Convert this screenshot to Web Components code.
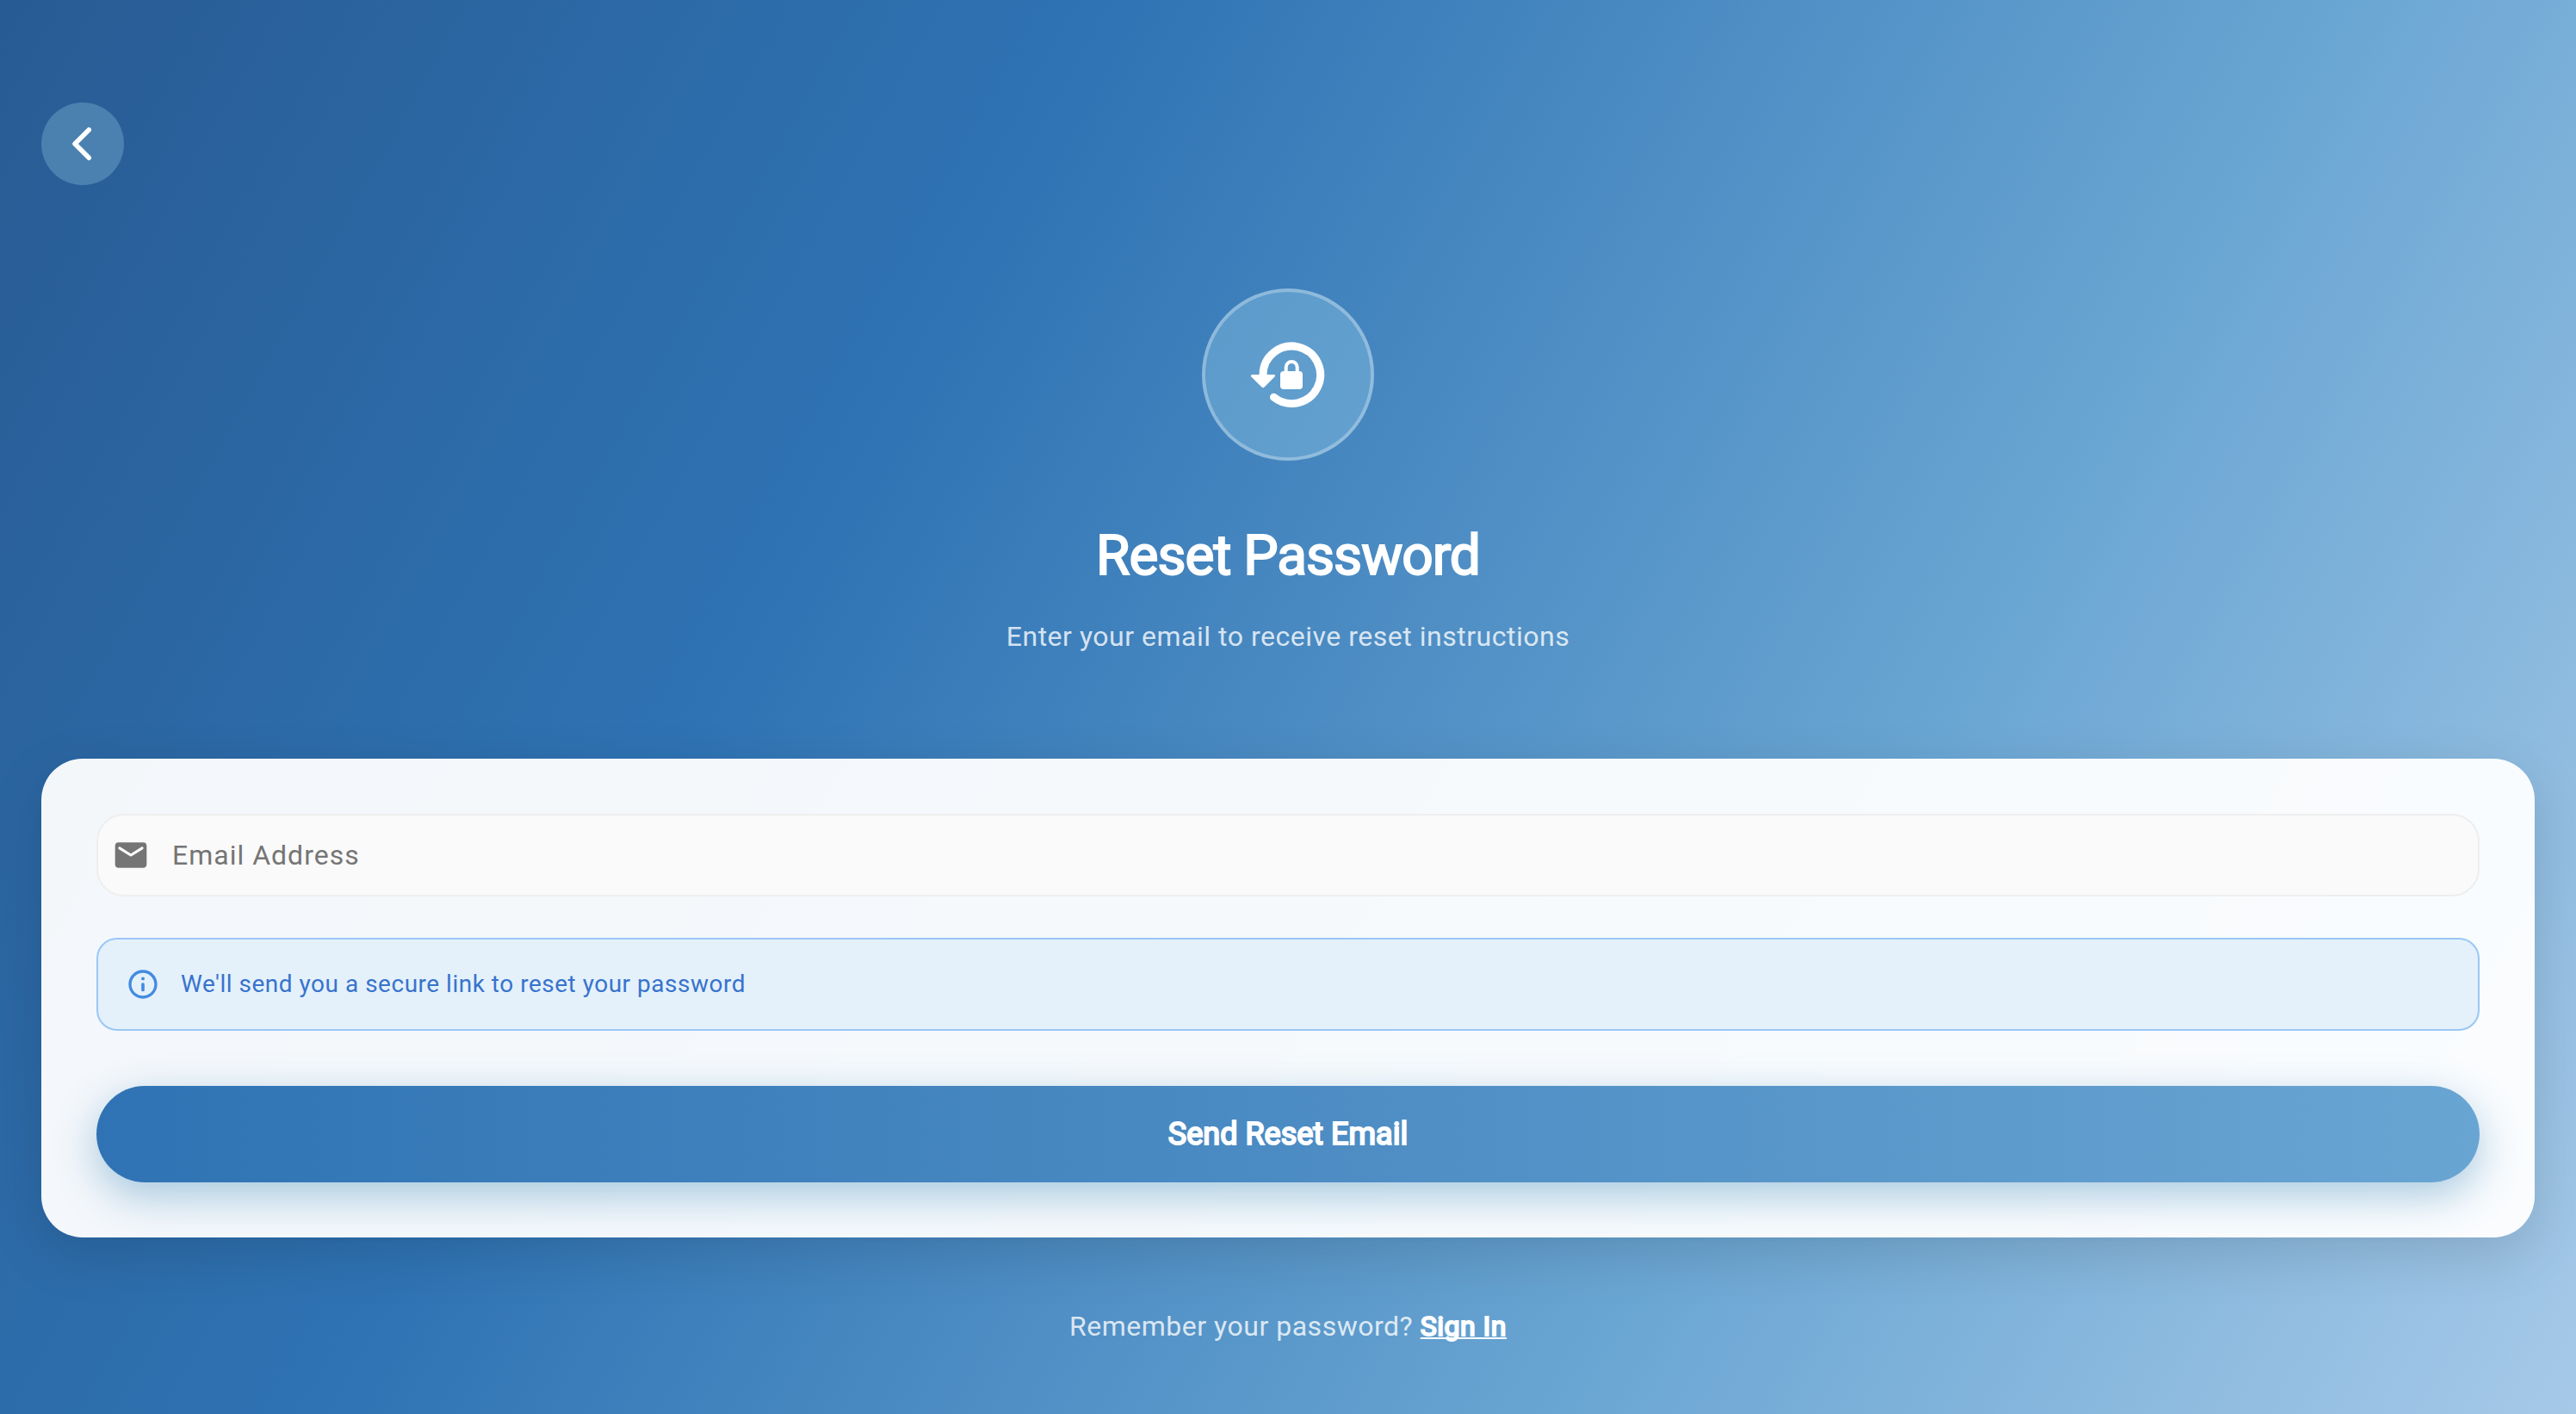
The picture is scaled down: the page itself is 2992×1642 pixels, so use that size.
<!DOCTYPE html>
<html lang="en">
<head>
<meta charset="utf-8">
<meta name="viewport" content="width=device-width, initial-scale=1">
<title>Reset Password</title>
<style>
  html, body { margin: 0; min-height: 100%; }
  body { font-family: Roboto, "Liberation Sans", sans-serif; -webkit-font-smoothing: antialiased; }
</style>
</head>
<body>
<reset-page>
  <back-button slot="nav"></back-button>
  <page-hero slot="hero">
    <span slot="title">Reset Password</span>
    <span slot="subtitle">Enter your email to receive reset instructions</span>
  </page-hero>
  <form-card slot="card">
    <email-field label="Email Address"></email-field>
    <info-note>We'll send you a secure link to reset your password</info-note>
    <primary-button>Send Reset Email</primary-button>
  </form-card>
  <sign-in-prompt slot="footer" href="#signin">
    Remember your password?
    <span slot="action">Sign In</span>
  </sign-in-prompt>
</reset-page>

<script>
  function define(name, markup, setup) {
    const template = document.createElement('template');
    template.innerHTML = markup;
    customElements.define(name, class extends HTMLElement {
      constructor() {
        super();
        this.attachShadow({ mode: 'open' }).append(template.content.cloneNode(true));
      }
      connectedCallback() {
        if (setup) setup(this, this.shadowRoot);
      }
    });
  }

  define('reset-page', `
    <style>
      :host {
        display: flex; flex-direction: column; box-sizing: border-box;
        min-height: 100vh; padding: 119px 48px 48px;
        background: linear-gradient(119deg, #285b93 0%, #2f73b4 33%, #6aa6d3 70%, #a6c9e8 100%);
      }
      header { display: flex; }
      main { display: flex; flex-direction: column; padding-top: 120px; }
      .card { margin-top: 122px; }
      footer { margin-top: 80px; }
    </style>
    <header><slot name="nav"></slot></header>
    <main>
      <slot name="hero"></slot>
      <div class="card"><slot name="card"></slot></div>
    </main>
    <footer><slot name="footer"></slot></footer>`);

  define('back-button', `
    <style>
      :host { display: block; }
      button {
        display: grid; place-items: center; width: 96px; height: 96px; padding: 0;
        border: 0; border-radius: 50%; background: rgba(139, 195, 222, 0.34); cursor: pointer;
      }
      svg { display: block; width: 48px; height: 48px; }
    </style>
    <button type="button" aria-label="Back">
      <svg viewBox="0 0 48 48" fill="none" stroke="#fff" stroke-width="5.500" stroke-linecap="round" stroke-linejoin="round">
        <path d="M31.300 7.700 15 24l16.300 16.300"/>
      </svg>
    </button>`);

  define('page-hero', `
    <style>
      :host { display: flex; flex-direction: column; align-items: center; text-align: center; color: #fff; }
      .badge {
        display: grid; place-items: center; box-sizing: border-box; width: 200px; height: 200px;
        border: 4px solid rgba(255, 255, 255, 0.3); border-radius: 50%;
        background: rgba(150, 205, 232, 0.36);
      }
      svg { display: block; width: 96px; height: 96px; }
      h1 {
        margin: 72px 0 0; font-size: 64px; line-height: 78px; font-weight: 400;
        letter-spacing: -1px; -webkit-text-stroke: 2px #fff;
      }
      p { margin: 34px 0 0; font-size: 32px; line-height: 40px; letter-spacing: 0.016em; color: rgba(255, 255, 255, 0.8); }
    </style>
    <div class="badge">
      <svg viewBox="0 0 96 96" aria-hidden="true">
        <path d="M19 49V48A33.300 33.300 0 1 1 31.500 74.300" fill="none" stroke="#fff" stroke-width="9" stroke-linecap="round"/>
        <path d="M6.500 48H31.500Q34 48.500 32.500 50.500L20.500 62.500Q19 64 17.500 62.500L5.300 50.500Q4 48.500 6.500 48Z" fill="#fff"/>
        <rect x="39" y="44" width="26" height="21" rx="4" fill="#fff"/>
        <path d="M45.700 46V39.500a6.500 6.500 0 0 1 13 0V46" fill="none" stroke="#fff" stroke-width="4"/>
      </svg>
    </div>
    <h1><slot name="title"></slot></h1>
    <p><slot name="subtitle"></slot></p>`);

  define('form-card', `
    <style>
      :host { display: block; }
      form {
        display: flex; flex-direction: column; padding: 64px; border-radius: 48px;
        background: rgba(255, 255, 255, 0.95); box-shadow: 0 20px 64px rgba(0, 0, 0, 0.13);
      }
      ::slotted(info-note) { margin-top: 48px; }
      ::slotted(primary-button) { margin-top: 64px; }
    </style>
    <form onsubmit="return false"><slot></slot></form>`);

  define('email-field', `
    <style>
      :host { display: block; }
      label {
        display: flex; align-items: center; gap: 26px; box-sizing: border-box; height: 96px; padding: 0 16px;
        border: 2px solid #eee; border-radius: 32px; background: #fafafa;
      }
      svg { flex: none; display: block; width: 44px; height: 44px; fill: #757575; }
      input {
        flex: 1; min-width: 0; padding: 0; border: 0; outline: 0; background: none;
        font: 32px/38px Roboto, "Liberation Sans", sans-serif; letter-spacing: 1px; color: #212121;
      }
      input::placeholder { color: #757575; opacity: 1; }
    </style>
    <label>
      <svg viewBox="0 0 24 24" aria-hidden="true">
        <path d="M20 4H4c-1.100 0-1.990.9-1.990 2L2 18c0 1.100.9 2 2 2h16c1.100 0 2-.9 2-2V6c0-1.100-.9-2-2-2zm-.4 4.250-7.070 4.420c-.32.2-.74.2-1.060 0L4.400 8.250c-.25-.16-.4-.43-.4-.72 0-.67.73-1.070 1.300-.72L12 11l6.700-4.190c.57-.35 1.300.05 1.300.72 0 .29-.15.56-.4.72z"/>
      </svg>
      <input type="email" autocomplete="email">
    </label>`,
    (host, root) => {
      const input = root.querySelector('input');
      input.placeholder = host.getAttribute('label');
      input.setAttribute('aria-label', host.getAttribute('label'));
    });

  define('info-note', `
    <style>
      :host {
        display: flex; align-items: center; gap: 24px; box-sizing: border-box; padding: 32px;
        border: 2px solid #9ac7f7; border-radius: 24px; background: #e4f1fb;
        font-size: 28px; line-height: 40px; letter-spacing: 0.018em; color: #3873cc;
      }
      svg { flex: none; display: block; width: 40px; height: 40px; fill: #428be0; }
    </style>
    <svg viewBox="0 0 24 24" aria-hidden="true">
      <path d="M12 2C6.480 2 2 6.480 2 12s4.480 10 10 10 10-4.480 10-10S17.520 2 12 2zm0 18c-4.410 0-8-3.590-8-8s3.590-8 8-8 8 3.590 8 8-3.590 8-8 8z"/>
      <rect x="10.900" y="11" width="2.200" height="6" rx="1"/>
      <rect x="10.900" y="7" width="2.200" height="2.200" rx=".6"/>
    </svg>
    <span><slot></slot></span>`);

  define('primary-button', `
    <style>
      :host { display: block; }
      button {
        display: block; width: 100%; height: 112px; padding: 0; border: 0; border-radius: 56px;
        background: linear-gradient(90deg, #2f73b4, #69a5d3);
        box-shadow: 0 16px 48px rgba(49, 130, 180, 0.4);
        font: 36px/44px Roboto, "Liberation Sans", sans-serif; color: #fff; -webkit-text-stroke: 2px #fff;
        cursor: pointer;
      }
    </style>
    <button type="submit"><slot></slot></button>`);

  define('sign-in-prompt', `
    <style>
      :host {
        display: block; text-align: center; font-size: 32px; line-height: 46px;
        letter-spacing: 0.016em; color: rgba(255, 255, 255, 0.8);
      }
      a { color: #fff; text-decoration: underline; text-decoration-thickness: 2px; text-decoration-skip-ink: none; text-underline-offset: 2px; }
      ::slotted([slot="action"]) { -webkit-text-stroke: 2px #fff; }
    </style>
    <slot></slot> <a><slot name="action"></slot></a>`,
    (host, root) => { root.querySelector('a').href = host.getAttribute('href'); });
</script>
</body>
</html>
